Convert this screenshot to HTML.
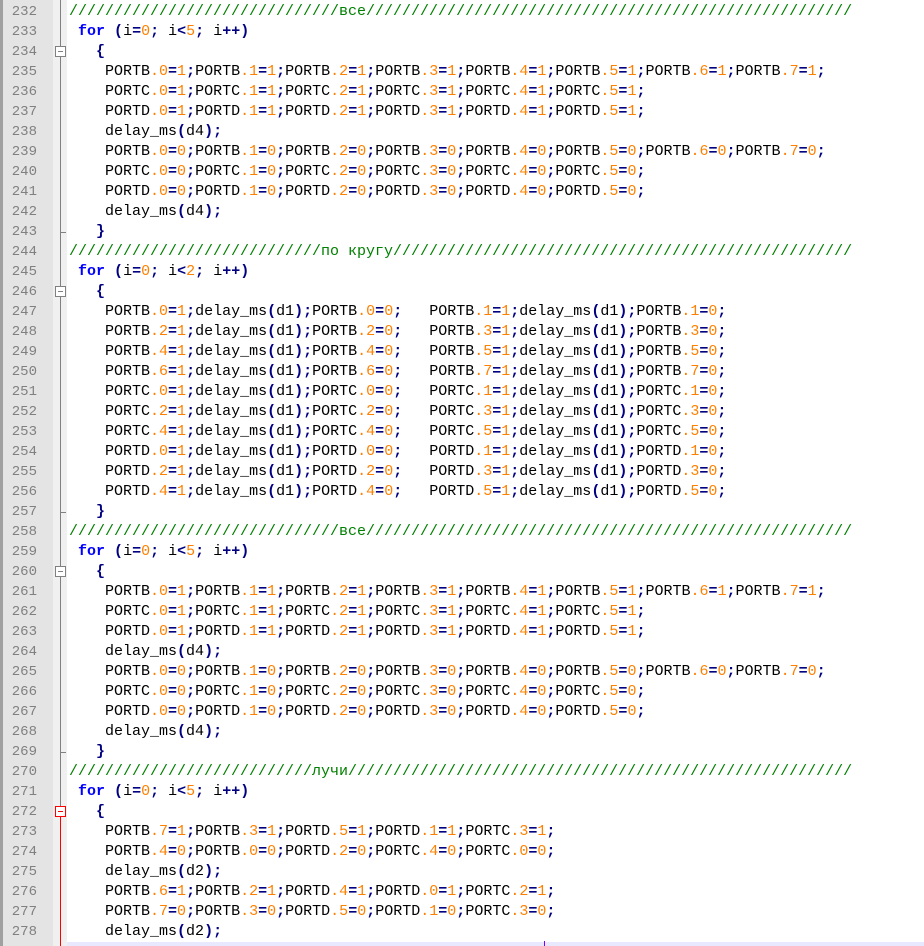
<!DOCTYPE html>
<html><head><meta charset="utf-8"><style>
html,body{margin:0;padding:0;background:#fff;width:924px;height:946px;overflow:hidden;position:relative}
#bd{position:absolute;left:0;top:0;width:3px;height:946px;background:#a0a0a0}
#ln{position:absolute;left:3px;top:0;width:50px;height:946px;background:#e4e4e4}
#fm{position:absolute;left:53px;top:0;width:14px;height:946px;background:#f0f0f0}
#nums{position:absolute;left:3px;top:2px;width:34px;margin:0;font:14px/20px "Liberation Mono",monospace;color:#808080;text-align:right}
pre#code{position:absolute;left:69px;top:2px;margin:0;font:15px/20px "Liberation Mono","DejaVu Sans Mono",monospace;color:#000}
pre#code b{color:#000080;font-weight:bold}
pre#code i{color:#ff8000;font-style:normal}
pre#code u{color:#008000;text-decoration:none}
pre#code s{color:#0000ff;font-weight:bold;text-decoration:none}
.vl{position:absolute;left:60px;width:1px}
.tk{position:absolute;left:60px;width:6px;height:1px;background:#808080}
.bx{position:absolute;left:55px;width:9px;height:9px;border:1px solid #808080;background:#fff}
.bx:after{content:"";position:absolute;left:2px;top:4px;width:5px;height:1px;background:#808080}
.bx.r{border-color:#f00}.bx.r:after{background:#f00}
#cur{position:absolute;left:67px;top:942px;width:857px;height:4px;background:#e8e8ff}
#caret{position:absolute;left:544px;top:941px;width:1px;height:5px;background:#8000ff}
</style></head><body>
<div id="bd"></div><div id="ln"></div><div id="fm"></div>
<div class="vl" style="top:0;height:807px;background:#808080"></div>
<div class="vl" style="top:817px;height:129px;background:#f00"></div>
<div class="tk" style="top:232px"></div>
<div class="tk" style="top:512px"></div>
<div class="tk" style="top:752px"></div>
<div class="bx" style="top:46px"></div>
<div class="bx" style="top:286px"></div>
<div class="bx" style="top:566px"></div>
<div class="bx r" style="top:806px"></div>
<div id="cur"></div><div id="caret"></div>
<pre id="nums">232
233
234
235
236
237
238
239
240
241
242
243
244
245
246
247
248
249
250
251
252
253
254
255
256
257
258
259
260
261
262
263
264
265
266
267
268
269
270
271
272
273
274
275
276
277
278</pre>
<pre id="code"><u>//////////////////////////////все//////////////////////////////////////////////////////</u>
 <s>for</s> <b>(</b>i<b>=</b><i>0</i><b>;</b> i<b>&lt;</b><i>5</i><b>;</b> i<b>++)</b>
   <b>{</b>
    PORTB<i>.0</i><b>=</b><i>1</i><b>;</b>PORTB<i>.1</i><b>=</b><i>1</i><b>;</b>PORTB<i>.2</i><b>=</b><i>1</i><b>;</b>PORTB<i>.3</i><b>=</b><i>1</i><b>;</b>PORTB<i>.4</i><b>=</b><i>1</i><b>;</b>PORTB<i>.5</i><b>=</b><i>1</i><b>;</b>PORTB<i>.6</i><b>=</b><i>1</i><b>;</b>PORTB<i>.7</i><b>=</b><i>1</i><b>;</b>
    PORTC<i>.0</i><b>=</b><i>1</i><b>;</b>PORTC<i>.1</i><b>=</b><i>1</i><b>;</b>PORTC<i>.2</i><b>=</b><i>1</i><b>;</b>PORTC<i>.3</i><b>=</b><i>1</i><b>;</b>PORTC<i>.4</i><b>=</b><i>1</i><b>;</b>PORTC<i>.5</i><b>=</b><i>1</i><b>;</b>
    PORTD<i>.0</i><b>=</b><i>1</i><b>;</b>PORTD<i>.1</i><b>=</b><i>1</i><b>;</b>PORTD<i>.2</i><b>=</b><i>1</i><b>;</b>PORTD<i>.3</i><b>=</b><i>1</i><b>;</b>PORTD<i>.4</i><b>=</b><i>1</i><b>;</b>PORTD<i>.5</i><b>=</b><i>1</i><b>;</b>
    delay_ms<b>(</b>d4<b>);</b>
    PORTB<i>.0</i><b>=</b><i>0</i><b>;</b>PORTB<i>.1</i><b>=</b><i>0</i><b>;</b>PORTB<i>.2</i><b>=</b><i>0</i><b>;</b>PORTB<i>.3</i><b>=</b><i>0</i><b>;</b>PORTB<i>.4</i><b>=</b><i>0</i><b>;</b>PORTB<i>.5</i><b>=</b><i>0</i><b>;</b>PORTB<i>.6</i><b>=</b><i>0</i><b>;</b>PORTB<i>.7</i><b>=</b><i>0</i><b>;</b>
    PORTC<i>.0</i><b>=</b><i>0</i><b>;</b>PORTC<i>.1</i><b>=</b><i>0</i><b>;</b>PORTC<i>.2</i><b>=</b><i>0</i><b>;</b>PORTC<i>.3</i><b>=</b><i>0</i><b>;</b>PORTC<i>.4</i><b>=</b><i>0</i><b>;</b>PORTC<i>.5</i><b>=</b><i>0</i><b>;</b>
    PORTD<i>.0</i><b>=</b><i>0</i><b>;</b>PORTD<i>.1</i><b>=</b><i>0</i><b>;</b>PORTD<i>.2</i><b>=</b><i>0</i><b>;</b>PORTD<i>.3</i><b>=</b><i>0</i><b>;</b>PORTD<i>.4</i><b>=</b><i>0</i><b>;</b>PORTD<i>.5</i><b>=</b><i>0</i><b>;</b>
    delay_ms<b>(</b>d4<b>);</b>
   <b>}</b>
<u>////////////////////////////по кругу///////////////////////////////////////////////////</u>
 <s>for</s> <b>(</b>i<b>=</b><i>0</i><b>;</b> i<b>&lt;</b><i>2</i><b>;</b> i<b>++)</b>
   <b>{</b>
    PORTB<i>.0</i><b>=</b><i>1</i><b>;</b>delay_ms<b>(</b>d1<b>);</b>PORTB<i>.0</i><b>=</b><i>0</i><b>;</b>   PORTB<i>.1</i><b>=</b><i>1</i><b>;</b>delay_ms<b>(</b>d1<b>);</b>PORTB<i>.1</i><b>=</b><i>0</i><b>;</b>
    PORTB<i>.2</i><b>=</b><i>1</i><b>;</b>delay_ms<b>(</b>d1<b>);</b>PORTB<i>.2</i><b>=</b><i>0</i><b>;</b>   PORTB<i>.3</i><b>=</b><i>1</i><b>;</b>delay_ms<b>(</b>d1<b>);</b>PORTB<i>.3</i><b>=</b><i>0</i><b>;</b>
    PORTB<i>.4</i><b>=</b><i>1</i><b>;</b>delay_ms<b>(</b>d1<b>);</b>PORTB<i>.4</i><b>=</b><i>0</i><b>;</b>   PORTB<i>.5</i><b>=</b><i>1</i><b>;</b>delay_ms<b>(</b>d1<b>);</b>PORTB<i>.5</i><b>=</b><i>0</i><b>;</b>
    PORTB<i>.6</i><b>=</b><i>1</i><b>;</b>delay_ms<b>(</b>d1<b>);</b>PORTB<i>.6</i><b>=</b><i>0</i><b>;</b>   PORTB<i>.7</i><b>=</b><i>1</i><b>;</b>delay_ms<b>(</b>d1<b>);</b>PORTB<i>.7</i><b>=</b><i>0</i><b>;</b>
    PORTC<i>.0</i><b>=</b><i>1</i><b>;</b>delay_ms<b>(</b>d1<b>);</b>PORTC<i>.0</i><b>=</b><i>0</i><b>;</b>   PORTC<i>.1</i><b>=</b><i>1</i><b>;</b>delay_ms<b>(</b>d1<b>);</b>PORTC<i>.1</i><b>=</b><i>0</i><b>;</b>
    PORTC<i>.2</i><b>=</b><i>1</i><b>;</b>delay_ms<b>(</b>d1<b>);</b>PORTC<i>.2</i><b>=</b><i>0</i><b>;</b>   PORTC<i>.3</i><b>=</b><i>1</i><b>;</b>delay_ms<b>(</b>d1<b>);</b>PORTC<i>.3</i><b>=</b><i>0</i><b>;</b>
    PORTC<i>.4</i><b>=</b><i>1</i><b>;</b>delay_ms<b>(</b>d1<b>);</b>PORTC<i>.4</i><b>=</b><i>0</i><b>;</b>   PORTC<i>.5</i><b>=</b><i>1</i><b>;</b>delay_ms<b>(</b>d1<b>);</b>PORTC<i>.5</i><b>=</b><i>0</i><b>;</b>
    PORTD<i>.0</i><b>=</b><i>1</i><b>;</b>delay_ms<b>(</b>d1<b>);</b>PORTD<i>.0</i><b>=</b><i>0</i><b>;</b>   PORTD<i>.1</i><b>=</b><i>1</i><b>;</b>delay_ms<b>(</b>d1<b>);</b>PORTD<i>.1</i><b>=</b><i>0</i><b>;</b>
    PORTD<i>.2</i><b>=</b><i>1</i><b>;</b>delay_ms<b>(</b>d1<b>);</b>PORTD<i>.2</i><b>=</b><i>0</i><b>;</b>   PORTD<i>.3</i><b>=</b><i>1</i><b>;</b>delay_ms<b>(</b>d1<b>);</b>PORTD<i>.3</i><b>=</b><i>0</i><b>;</b>
    PORTD<i>.4</i><b>=</b><i>1</i><b>;</b>delay_ms<b>(</b>d1<b>);</b>PORTD<i>.4</i><b>=</b><i>0</i><b>;</b>   PORTD<i>.5</i><b>=</b><i>1</i><b>;</b>delay_ms<b>(</b>d1<b>);</b>PORTD<i>.5</i><b>=</b><i>0</i><b>;</b>
   <b>}</b>
<u>//////////////////////////////все//////////////////////////////////////////////////////</u>
 <s>for</s> <b>(</b>i<b>=</b><i>0</i><b>;</b> i<b>&lt;</b><i>5</i><b>;</b> i<b>++)</b>
   <b>{</b>
    PORTB<i>.0</i><b>=</b><i>1</i><b>;</b>PORTB<i>.1</i><b>=</b><i>1</i><b>;</b>PORTB<i>.2</i><b>=</b><i>1</i><b>;</b>PORTB<i>.3</i><b>=</b><i>1</i><b>;</b>PORTB<i>.4</i><b>=</b><i>1</i><b>;</b>PORTB<i>.5</i><b>=</b><i>1</i><b>;</b>PORTB<i>.6</i><b>=</b><i>1</i><b>;</b>PORTB<i>.7</i><b>=</b><i>1</i><b>;</b>
    PORTC<i>.0</i><b>=</b><i>1</i><b>;</b>PORTC<i>.1</i><b>=</b><i>1</i><b>;</b>PORTC<i>.2</i><b>=</b><i>1</i><b>;</b>PORTC<i>.3</i><b>=</b><i>1</i><b>;</b>PORTC<i>.4</i><b>=</b><i>1</i><b>;</b>PORTC<i>.5</i><b>=</b><i>1</i><b>;</b>
    PORTD<i>.0</i><b>=</b><i>1</i><b>;</b>PORTD<i>.1</i><b>=</b><i>1</i><b>;</b>PORTD<i>.2</i><b>=</b><i>1</i><b>;</b>PORTD<i>.3</i><b>=</b><i>1</i><b>;</b>PORTD<i>.4</i><b>=</b><i>1</i><b>;</b>PORTD<i>.5</i><b>=</b><i>1</i><b>;</b>
    delay_ms<b>(</b>d4<b>);</b>
    PORTB<i>.0</i><b>=</b><i>0</i><b>;</b>PORTB<i>.1</i><b>=</b><i>0</i><b>;</b>PORTB<i>.2</i><b>=</b><i>0</i><b>;</b>PORTB<i>.3</i><b>=</b><i>0</i><b>;</b>PORTB<i>.4</i><b>=</b><i>0</i><b>;</b>PORTB<i>.5</i><b>=</b><i>0</i><b>;</b>PORTB<i>.6</i><b>=</b><i>0</i><b>;</b>PORTB<i>.7</i><b>=</b><i>0</i><b>;</b>
    PORTC<i>.0</i><b>=</b><i>0</i><b>;</b>PORTC<i>.1</i><b>=</b><i>0</i><b>;</b>PORTC<i>.2</i><b>=</b><i>0</i><b>;</b>PORTC<i>.3</i><b>=</b><i>0</i><b>;</b>PORTC<i>.4</i><b>=</b><i>0</i><b>;</b>PORTC<i>.5</i><b>=</b><i>0</i><b>;</b>
    PORTD<i>.0</i><b>=</b><i>0</i><b>;</b>PORTD<i>.1</i><b>=</b><i>0</i><b>;</b>PORTD<i>.2</i><b>=</b><i>0</i><b>;</b>PORTD<i>.3</i><b>=</b><i>0</i><b>;</b>PORTD<i>.4</i><b>=</b><i>0</i><b>;</b>PORTD<i>.5</i><b>=</b><i>0</i><b>;</b>
    delay_ms<b>(</b>d4<b>);</b>
   <b>}</b>
<u>///////////////////////////лучи////////////////////////////////////////////////////////</u>
 <s>for</s> <b>(</b>i<b>=</b><i>0</i><b>;</b> i<b>&lt;</b><i>5</i><b>;</b> i<b>++)</b>
   <b>{</b>
    PORTB<i>.7</i><b>=</b><i>1</i><b>;</b>PORTB<i>.3</i><b>=</b><i>1</i><b>;</b>PORTD<i>.5</i><b>=</b><i>1</i><b>;</b>PORTD<i>.1</i><b>=</b><i>1</i><b>;</b>PORTC<i>.3</i><b>=</b><i>1</i><b>;</b>
    PORTB<i>.4</i><b>=</b><i>0</i><b>;</b>PORTB<i>.0</i><b>=</b><i>0</i><b>;</b>PORTD<i>.2</i><b>=</b><i>0</i><b>;</b>PORTC<i>.4</i><b>=</b><i>0</i><b>;</b>PORTC<i>.0</i><b>=</b><i>0</i><b>;</b>
    delay_ms<b>(</b>d2<b>);</b>
    PORTB<i>.6</i><b>=</b><i>1</i><b>;</b>PORTB<i>.2</i><b>=</b><i>1</i><b>;</b>PORTD<i>.4</i><b>=</b><i>1</i><b>;</b>PORTD<i>.0</i><b>=</b><i>1</i><b>;</b>PORTC<i>.2</i><b>=</b><i>1</i><b>;</b>
    PORTB<i>.7</i><b>=</b><i>0</i><b>;</b>PORTB<i>.3</i><b>=</b><i>0</i><b>;</b>PORTD<i>.5</i><b>=</b><i>0</i><b>;</b>PORTD<i>.1</i><b>=</b><i>0</i><b>;</b>PORTC<i>.3</i><b>=</b><i>0</i><b>;</b>
    delay_ms<b>(</b>d2<b>);</b></pre>
</body></html>
